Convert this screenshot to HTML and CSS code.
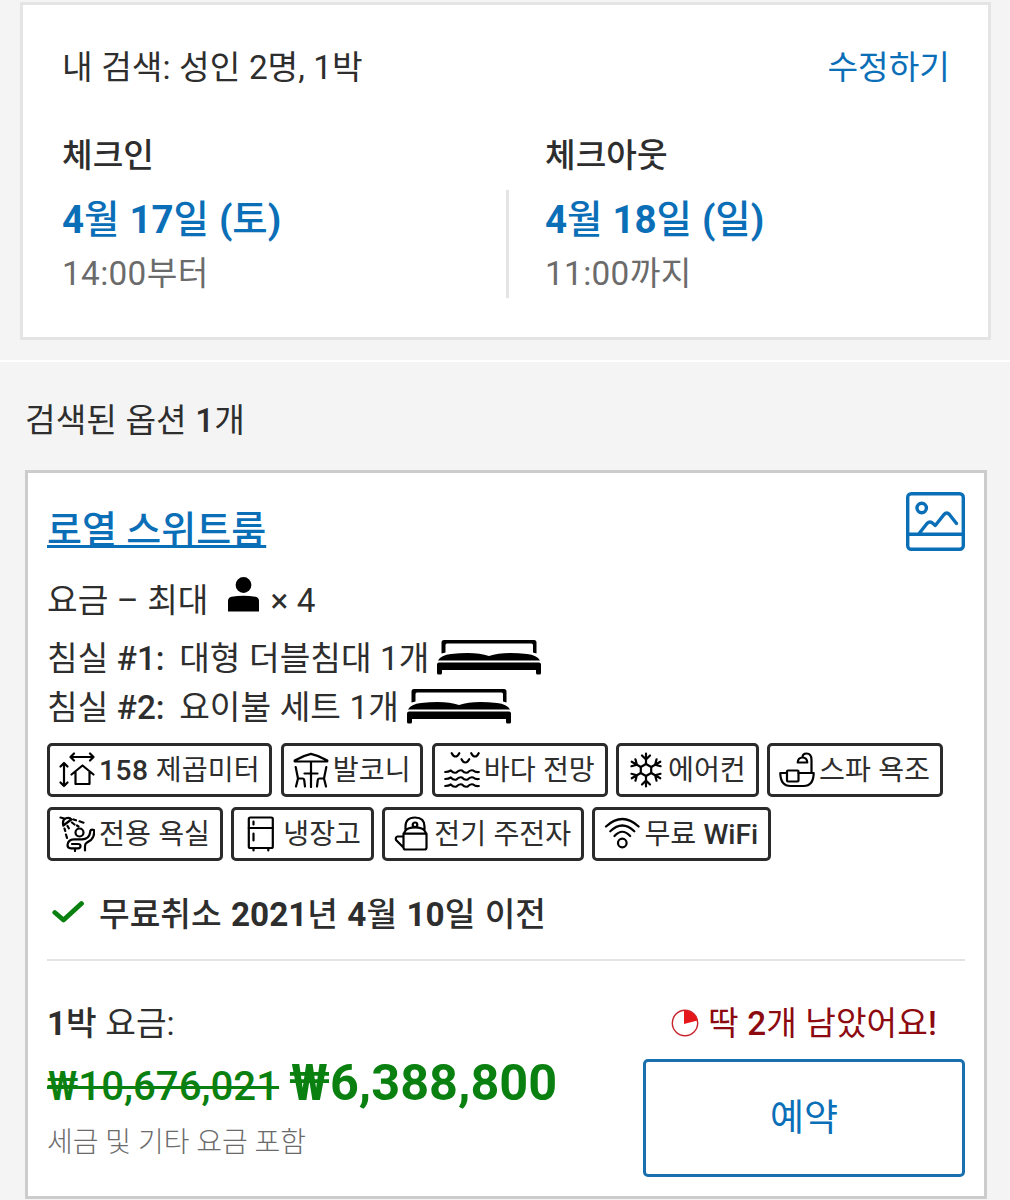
FILE: index.html
```html
<!DOCTYPE html>
<html lang="ko">
<head>
<meta charset="utf-8">
<title>로열 스위트룸</title>
<link rel="stylesheet" href="styles.css">
</head>
<body>
<section class="search">
  <div class="search-card">
    <div class="search-head">
      <span>내 검색: 성인 2명, 1박</span>
      <a class="edit">수정하기</a>
    </div>
    <div class="dates">
      <div class="date">
        <div class="date-label">체크인</div>
        <div class="date-day"><b>4</b>월 <b>17</b>일 <b>(</b>토<b>)</b></div>
        <div class="date-time">14:00부터</div>
      </div>
      <div class="date-line"></div>
      <div class="date">
        <div class="date-label">체크아웃</div>
        <div class="date-day"><b>4</b>월 <b>18</b>일 <b>(</b>일<b>)</b></div>
        <div class="date-time">11:00까지</div>
      </div>
    </div>
  </div>
</section>

<section class="results">
  <h2 class="count">검색된 옵션 <span class="mid">1</span>개</h2>
  <article class="room">
    <div class="room-head">
      <a class="room-name">로열 스위트룸</a>
      <svg class="photo" viewBox="0 0 59 59" fill="none" stroke="currentColor" stroke-width="3.4" stroke-linecap="round" stroke-linejoin="round">
        <rect x="1.7" y="1.7" width="55.6" height="55.6" rx="3.5"/>
        <circle cx="15.7" cy="16" r="4.7"/>
        <path d="M2 42.3H57M13.5 41L21 31.5Q24 28.500 27 31.500L29.300 33.500L38 22.500Q40.700 19.500 43.400 22.500L50.500 31.500"/>
      </svg>
    </div>
    <div class="guests">
      <span>요금 – 최대</span>
      <svg class="person" viewBox="0 0 31 35"><circle cx="15.500" cy="8" r="7.900"/><path d="M0 34.500V24Q0 20.500 3.500 19.700Q15.500 17.600 27.500 19.700Q31 20.500 31 24V34.500Z"/></svg>
      <span>× 4</span>
    </div>
    <div class="bed-row">
      <span class="bed-text"><span class="bed-name">침실 <span class="mid">#1:</span></span> 대형 더블침대 1개</span>
      <svg class="bed" viewBox="0 0 104 35"><path d="M4.500 13.500V2.500Q4.500 0 7 0H97Q99.500 0 99.500 2.500V13.500L96 12.500V5Q96 3.500 94.500 3.500H10Q8.500 3.500 8.500 5V12.500Z"/><path d="M1 20.500Q4 15 14 14Q38 11 52 16Q66 11 90 14Q100 15 103 20.500Z"/><path d="M0 24.500Q0 22.500 2 22.500H102Q104 22.500 104 24.500V33Q104 34.500 102.500 34.500H100.500Q99 34.500 99 33V30H5V33Q5 34.500 3.500 34.500H1.500Q0 34.500 0 33Z"/></svg>
    </div>
    <div class="bed-row">
      <span class="bed-text"><span class="bed-name">침실 <span class="mid">#2:</span></span> 요이불 세트 1개</span>
      <svg class="bed" viewBox="0 0 104 35"><path d="M4.500 13.500V2.500Q4.500 0 7 0H97Q99.500 0 99.500 2.500V13.500L96 12.500V5Q96 3.500 94.500 3.500H10Q8.500 3.500 8.500 5V12.500Z"/><path d="M1 20.500Q4 15 14 14Q38 11 52 16Q66 11 90 14Q100 15 103 20.500Z"/><path d="M0 24.500Q0 22.500 2 22.500H102Q104 22.500 104 24.500V33Q104 34.500 102.500 34.500H100.500Q99 34.500 99 33V30H5V33Q5 34.500 3.500 34.500H1.500Q0 34.500 0 33Z"/></svg>
    </div>
    <ul class="tags">
      <li class="tag"><svg class="icon" viewBox="0 0 36 36"><path d="M11.500 5H34.500M15 1.500L11.500 5L15 8.500M31 1.500L34.500 5L31 8.500M5 11V34M1.500 14.500L5 11L8.500 14.500M1.500 30.500L5 34L8.500 30.500M12.500 22.500L23.500 13.500L34.500 22.500M16.500 20V32H30.500V20"/></svg><span><span class="mid area">158</span> 제곱미터</span></li>
      <li class="tag"><svg class="icon" viewBox="0 0 36 36"><path d="M1.700 8.500Q10 3.500 18 1.800Q26 3.500 34.300 8.500V9.500H1.700ZM18 9.500V35M11.500 21.500H24.500M2.700 15L5 26.500H9.500Q11 26.500 11.200 28L12 34.500M5 26.500L3 34.500M33.300 15L31 26.500H26.500Q25 26.500 24.800 28L24 34.500M31 26.500L33 34.500"/></svg><span>발코니</span></li>
      <li class="tag"><svg class="icon" viewBox="0 0 36 36"><path d="M7.700 1.200Q9.500 4.500 11.500 4.500Q13.500 4.500 15.300 1.200M27.200 1.200Q29 4.500 31 4.500Q33 4.500 34.700 1.200M17.500 7.200Q19.300 10.500 21.300 10.500Q23.300 10.500 25.200 7.200M1.200 20Q4.500 20 6.800 18.500Q9.600 21.500 12.400 20.500Q15.200 17.500 18 18.500Q20.800 21.500 23.600 20.500Q26.400 17.500 29.200 18.500Q31.500 20.500 34.800 20M1.200 27Q4.500 27 6.800 25.500Q9.600 28.500 12.400 27.500Q15.200 24.500 18 25.500Q20.800 28.500 23.600 27.500Q26.400 24.500 29.200 25.500Q31.500 27.500 34.800 27M1.200 34Q4.500 34 6.800 32.500Q9.600 35.500 12.400 34.500Q15.200 31.500 18 32.500Q20.800 35.500 23.600 34.500Q26.400 31.500 29.200 32.500Q31.500 34.500 34.800 34"/></svg><span>바다 전망</span></li>
      <li class="tag"><svg class="icon" viewBox="0 0 36 36"><path d="M18 12L23.200 15V21L18 24L12.800 21V15Z"/><g id="arm"><path d="M18 12V1.500M14 3.500L18 7.500L22 3.500"/></g><use href="#arm" transform="rotate(60 18 18)"/><use href="#arm" transform="rotate(120 18 18)"/><use href="#arm" transform="rotate(180 18 18)"/><use href="#arm" transform="rotate(240 18 18)"/><use href="#arm" transform="rotate(300 18 18)"/></svg><span>에어컨</span></li>
      <li class="tag"><svg class="icon" viewBox="0 0 36 36"><path d="M8 21H1.300Q1.500 34 11.500 34H24.500Q34.500 34 34.700 21H19.500M32.500 21V8Q32.500 1.500 27.500 1.500Q23.500 1.500 23.500 5.500M18.700 10.500Q19 5.500 23.500 5.500Q28 5.500 28.300 10.500Z"/><rect x="8" y="18.500" width="11.500" height="11" rx="1"/></svg><span>스파 욕조</span></li>
      <li class="tag"><svg class="icon" viewBox="0 0 36 36"><path d="M1.500 1.500L6 2.700M4.300 9.500Q3 3.500 7 2.300Q10.500 1 12.300 3.500ZM14.500 3.500L17 4.300M20.500 5.300L24.500 6.700M13 6.500L15.500 8.500M18 9.500L19.500 10.500M8.500 10L9.800 12.300M5.500 12.500L6.200 15M7 18.500L8 22M35 14Q36 20 32 24L28 26.500Q26 27.500 26 30V34.500M35 14Q31 12.500 31 17Q30 23 23 23.300H15Q9 23.500 8.500 29Q8.500 32.300 12 32.300H19Q21.500 32.300 21.500 30Q21.500 28 19 28H13M16 32.300V35"/><circle cx="20.500" cy="16.500" r="4"/></svg><span>전용 욕실</span></li>
      <li class="tag"><svg class="icon" viewBox="0 0 36 36"><rect x="5.800" y="1.500" width="24" height="30.500" rx="1.500"/><path d="M5.800 12H29.800M10.500 5.500V8.500M10.500 17.500V24.500M10.500 32V34.500M25.300 32V34.500"/></svg><span>냉장고</span></li>
      <li class="tag"><svg class="icon" viewBox="0 0 36 36"><path d="M11.500 13.500V10.500Q11.500 1.500 21 1.500Q30.500 1.500 30.500 10.500V13.500M11.500 14.500Q14 11.300 21 11.300Q28 11.300 30.500 14.500L32.500 18V31.500Q32.500 33.500 30.500 33.500H11.500Q9.500 33.500 9.500 31.500V18ZM9.500 17.700H32.500M9.500 20.500H3.500Q1.200 21 2 24L9.500 31.500"/><circle cx="21" cy="8.800" r="2.300"/></svg><span>전기 주전자</span></li>
      <li class="tag"><svg class="icon" viewBox="0 0 36 36"><path d="M2 10.500Q18.300-4.500 34.600 10.500M6.300 15.300Q18.300 3.700 30.300 15.300M10.500 20Q18.300 11.500 26.100 20"/><circle cx="18.300" cy="27" r="4.300"/></svg><span>무료 <span class="mid">WiFi</span></span></li>
    </ul>
    <div class="cancel">
      <svg class="check" viewBox="0 0 32 24"><path d="M2.800 12.500L11.500 20L29.500 3.500"/></svg>
      <span class="cancel-text">무료취소 <b>2021</b>년 <b>4</b>월 <b>10</b>일 이전</span>
    </div>
    <div class="booking">
      <div class="price">
        <div class="price-label"><span class="mid"><b>1</b>박</span> 요금:</div>
        <div class="price-row"><s class="old">₩10,676,021</s><strong class="new">₩6,388,800</strong></div>
        <div class="tax">세금 및 기타 요금 포함</div>
      </div>
      <div class="reserve">
        <div class="left"><svg class="pie" viewBox="0 0 28 28"><circle cx="14" cy="14" r="12.700" fill="none" stroke="#c8242c" stroke-width="1.400"/><path d="M13 15V1.500A12.700 12.700 0 0 1 26.400 11.500Z" fill="#e6171b"/></svg><span>딱 <span class="mid">2</span>개 남았어요<span class="mid">!</span></span></div>
        <button class="book">예약</button>
      </div>
    </div>
  </article>
</section>
</body>
</html>
```
FILE: styles.css
```css
* { box-sizing: border-box; }

body {
  margin: 0;
  height: 1200px;
  overflow: hidden;
  background: #f4f4f4;
  color: #2e2e2e;
  font-family: Roboto, "Noto Sans CJK KR", sans-serif;
  font-size: 33.3px;
  line-height: 48px;
  word-spacing: 0.3px;
  white-space: nowrap;
}

svg { display: block; flex: none; }
b { font-weight: 700; }
.mid { font-weight: 500; }

.search {
  height: 362px;
  padding: 2px 19px 0 20px;
  border-bottom: 2px solid #fff;
}
.search-card {
  height: 338px;
  padding: 39px 38px 0 39px;
  border: 3px solid #e4e4e4;
  background: #fff;
}
.search-head {
  display: flex;
  justify-content: space-between;
}
.edit { color: #0b6fb8; }
.dates {
  display: grid;
  grid-template-columns: 444px 3px 1fr;
  margin-top: 40px;
}
.date-line {
  height: 108px;
  margin-top: 58px;
  background: #e4e4e4;
}
.date:last-child { padding-left: 36px; }
.date-label { font-weight: 500; }
.date-day {
  margin-top: 12px;
  color: #0b6fb8;
  font-size: 38.5px;
  line-height: 56px;
  font-weight: 500;
}
.date-time {
  margin-top: 2px;
  color: #6b6b6b;
  letter-spacing: 0.35px;
}

.results { padding: 35px 23px 0 25px; }
.count {
  margin: 0;
  font: inherit;
}
.room {
  height: 729px;
  margin-top: 25px;
  padding: 19px 19px 0;
  border: 3px solid #ccc;
  background: #fff;
}
.room-head {
  display: flex;
  justify-content: space-between;
  height: 76px;
}
.room-name {
  height: 56px;
  margin-top: 10px;
  color: #0b6fb8;
  font-size: 38px;
  line-height: 56px;
  font-weight: 500;
  word-spacing: 0;
  text-decoration: underline;
  text-decoration-thickness: 3px;
  text-decoration-skip-ink: none;
}
.photo { width: 59px; height: 59px; color: #0b6fb8; }
.guests {
  display: flex;
  align-items: center;
  height: 65px;
}
.person {
  width: 31px;
  height: 35px;
  margin: -13px 12px 0 19px;
  fill: #000;
}
.bed-row {
  display: flex;
  align-items: center;
  height: 49px;
}
.bed-text { padding-top: 2px; }
.bed-name { margin-right: 6px; }
.bed {
  width: 104px;
  height: 35px;
  margin-left: 8px;
  fill: #000;
}
.tags {
  display: flex;
  flex-wrap: wrap;
  gap: 10px 8.5px;
  margin: 12px 0 0;
  padding: 0;
  list-style: none;
}
.tag {
  display: flex;
  align-items: center;
  height: 54px;
  padding: 0 9.7px 0 9px;
  border: 3px solid #2b2b2b;
  border-radius: 5px;
  font-size: 28.2px;
}
.tag > span { padding-top: 2px; }
.area { letter-spacing: 0.5px; }
.icon {
  width: 36px;
  height: 36px;
  margin: 0 4px 0 0;
  fill: none;
  stroke: #000;
  stroke-width: 2.2;
  stroke-linecap: round;
  stroke-linejoin: round;
}
.cancel {
  display: flex;
  align-items: center;
  height: 100px;
  border-bottom: 2px solid #e4e4e4;
  font-weight: 500;
  word-spacing: 1.1px;
}
.cancel-text { padding-top: 10px; }
.check {
  width: 32px;
  height: 24px;
  margin: 4px 15px 0 5px;
  fill: none;
  stroke: #0a8010;
  stroke-width: 4.8;
  stroke-linecap: round;
  stroke-linejoin: round;
}
.booking {
  display: flex;
  justify-content: space-between;
  padding-top: 39px;
}
.price-row {
  display: flex;
  align-items: baseline;
  gap: 10px;
  height: 71px;
  color: #0a8010;
  line-height: 70px;
}
.old {
  font-size: 40.2px;
  font-weight: 500;
  text-decoration-thickness: 3px;
}
.new { font-size: 50.4px; font-weight: 700; }
.tax {
  color: #6b6b6b;
  font-size: 28px;
  font-weight: 300;
  word-spacing: 0;
}
.reserve { width: 322px; }
.left {
  display: flex;
  align-items: center;
  padding-left: 28px;
  color: #8c0a10;
}
.pie { width: 28px; height: 28px; margin: -2px 9px 0 0; }
.book {
  display: block;
  width: 322px;
  height: 118px;
  margin-top: 11px;
  padding: 2px 0 0;
  border: 3px solid #1a6fae;
  border-radius: 5px;
  background: #fff;
  color: #0b6fb8;
  font: inherit;
  font-size: 37px;
}
```
